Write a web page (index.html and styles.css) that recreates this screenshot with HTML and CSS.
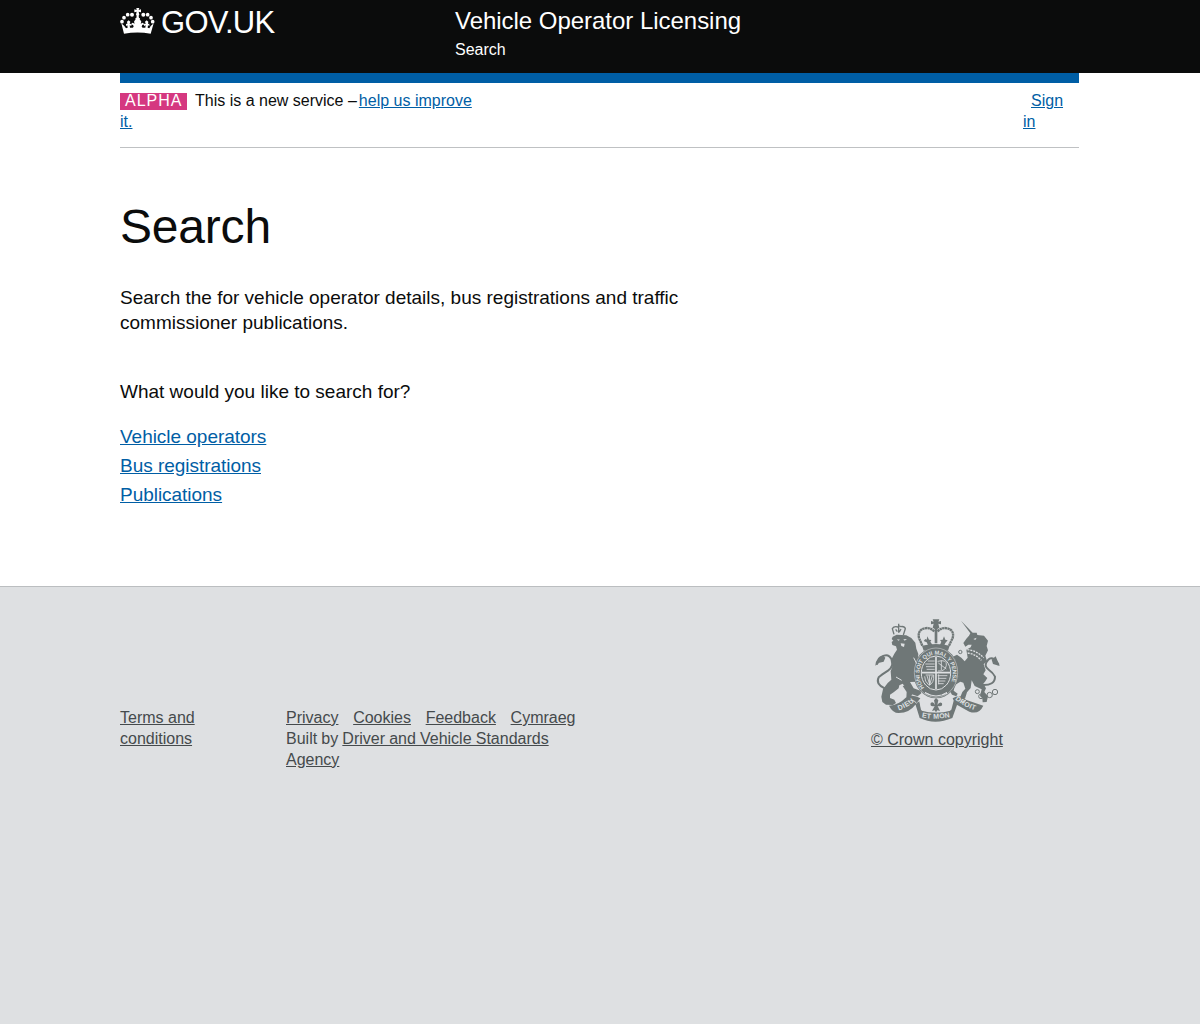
FILE: index.html
```html
<!DOCTYPE html>
<html lang="en">
<head>
<meta charset="utf-8">
<title>Search - Vehicle Operator Licensing</title>
<link rel="stylesheet" href="styles.css">
</head>
<body>
<header class="header">
  <div class="container header-inner">
    <a class="logo" href="#">
      <svg class="crown" viewBox="0 0 105 78" fill="#fff" aria-hidden="true">
        <path d="M49 0h9l-2 6 7-2v9l-7-2 2 9-2 3 1 7h-8l1-7-2-3 2-9-7 2V4l7 2z"/>
        <circle cx="36" cy="20" r="6"/><circle cx="23" cy="20" r="5.5"/><circle cx="12" cy="29" r="5.5"/><circle cx="6" cy="41" r="5.5"/>
        <circle cx="70" cy="20" r="6"/><circle cx="83" cy="20" r="5.5"/><circle cx="93" cy="29" r="5.5"/><circle cx="98" cy="41" r="5.5"/>
        <path d="M4 46l9 8 5 7 5-2-1-7-4 2v-7l4 1-1-7 5-4 5 4-2 7 5-1v7l-5-2 1 7q8 2 11-3l-2-6-4 1q-2-6 3-7l6 3-2-6 3-5 2-2-1-4h14l-1 4 2 2 3 5-2 6 6-3q5 1 3 7l-4-1-2 6q3 5 11 3l1-7-5 2v-7l5 1-2-7 5-4 5 4-1 7 4-1v7l-4-2-1 7 5 2 4-7 9-8-9 31q-39-7-80 0z"/>
      </svg>
      <span class="logo-text">GOV.UK</span>
    </a>
    <div class="service">
      <div class="service-name">Vehicle Operator Licensing</div>
      <div class="service-nav">Search</div>
    </div>
  </div>
</header>
<div class="container blue-bar"></div>
<div class="container phase">
  <p class="phase-text"><strong class="tag">ALPHA</strong><span class="phase-copy">This is a new service –</span><a href="#">help us improve<br>it.</a></p>
  <p class="sign-in"><a href="#">Sign<br>in</a></p>
</div>
<main class="container main">
  <h1>Search</h1>
  <p class="lead">Search the for vehicle operator details, bus registrations and traffic<br>commissioner publications.</p>
  <p class="question">What would you like to search for?</p>
  <ul class="links">
    <li><a href="#">Vehicle operators</a></li>
    <li><a href="#">Bus registrations</a></li>
    <li><a href="#">Publications</a></li>
  </ul>
</main>
<footer class="footer">
  <div class="container footer-inner">
    <div class="terms"><a href="#">Terms and<br>conditions</a></div>
    <div class="meta">
      <div class="meta-links"><a href="#">Privacy</a><a href="#">Cookies</a><a href="#">Feedback</a><a href="#">Cymraeg</a></div>
      <div class="built">Built by <a href="#">Driver and Vehicle Standards<br>Agency</a></div>
    </div>
    <div class="copyright">
      <svg class="crest" viewBox="0 0 435 345" aria-hidden="true">
        <defs>
          <path id="garter" d="M178 233A50 58 0 1 1 248 233"/>
          <path id="dieu" d="M101 301Q129 292 154 270"/>
          <path id="mon" d="M170 322Q214 331 260 320"/>
          <path id="droit" d="M270 268Q300 293 337 303"/>
        </defs>
        <g fill="#6f7777">
          <path d="M83 80L95 74L124 76L139 84L151 98L154 116L160 132L158 151L170 163L175 174L164 181L154 175L150 184L160 203L155 215L135 216L146 235L166 242L169 250L158 259L138 252L124 235L113 221L103 226L101 235L87 246L75 254L75 264L88 269L93 279L84 285L63 284L52 276L49 260L54 238L68 219L79 209L77 184L82 170L77 152L88 131L96 119L93 109L82 105L80 96L85 92L80 87Z"/>
          <path d="M127 224l18 19-9 24 14 2 5 8-21 2-10-14 1-19-12-18z"/>
          <path d="M288 32L323 68L335 68L337 75L357 77L369 92L365 108L369 121L361 137L366 153L356 163L362 181L355 193L367 204L361 214L355 221L363 235L358 246L369 259L365 276L353 277L352 265L345 258L350 238L329 228L320 211L317 234L306 247L300 266L285 263L292 246L301 236L295 218L286 215L270 225L266 242L278 251L274 259L261 254L254 242L260 218L280 199L266 187L276 174L269 164L259 158L272 151L264 140L276 134L289 143L299 154L308 143L306 131L304 119L317 112L320 104L310 104L301 110L295 99L304 86L312 77L316 70Z"/>
          <ellipse cx="213" cy="188" rx="68" ry="77"/>
          <path d="M171 107Q213 97 254 107L249 122Q212 111 176 122Z"/>
          <path d="M203 28h20l-3 7 8-2v10l-8-2 3 12-6 4v43h-8V57l-6-4 3-12-8 2V33l8 2z"/>
          <path d="M190 107l-5-10-9-4 5-6 4 2 2-10 5 10 7 1-3 5 8 12zM224 107l5-12-4-5 8-1 4-10 4 10 7 2-7 8-4 9z"/>
          <path d="M72 287q30-3 50-24 22-13 44 2l-15 19q-17 24-50 25-18 0-29-22zM151 282l12-8 5 25q46 16 91 0l7-27 10 13-14 39q-52 22-98 0zM263 265q22-15 41 5l51 17q-13 28-42 18l-43-24z"/>
        </g>
        <g fill="none" stroke="#6f7777">
          <path d="M172 107L162 84Q157 60 179 55Q196 51 208 65M252 107L263 84Q269 61 247 55Q229 51 217 65" stroke-width="7" stroke-dasharray="7 1"/>
          <path d="M87 73l-5-17q5-9 17-5l4-3 4 2q12-2 14 6l-6 19M101 41v27M92 58l5 7m11-8l-5 9" stroke-width="4"/>
          <path d="M59 235Q31 222 41 202Q49 195 69 182Q88 168 80 149Q72 132 57 137Q42 143 35 164M351 225Q390 227 390 200Q384 188 372 180Q353 167 369 150Q382 134 401 164" stroke-width="6"/>
          <circle cx="337" cy="245" r="6" stroke-width="3"/><circle cx="348" cy="259" r="7" stroke-width="3"/><circle cx="374" cy="255" r="8" stroke-width="3"/><circle cx="390" cy="246" r="8" stroke-width="3"/><circle cx="286" cy="126" r="5" stroke-width="3"/>
        </g>
        <path fill="#6f7777" d="M31 167q3-27 22-31l8 7-5 12-13 3zM404 168l-12-29-12 10 4 13z"/>
        <g fill="#dee0e2">
          <path d="M96 88l9 1-5 3zM115 88l11-1-7 5zM107 100l12 1-2 10-8-3zM325 87l10-4-4 7z"/>
          <path d="M164 275q47 20 99 0l-7 27q-43 11-86 0z"/>
        </g>
        <g fill="none" stroke="#dee0e2">
          <path d="M307 119q28 3 49 24m-48-14q24 3 41 22" stroke-width="4" stroke-dasharray="6 3"/>
          <ellipse cx="213" cy="188" rx="65" ry="74" stroke-width="1.5"/>
          <ellipse cx="213" cy="189" rx="44" ry="51" stroke-width="3"/>
          <path d="M213 141v96M171 188h84" stroke-width="5"/>
          <path d="M181 162h28m-26 8h26m-24 8h24m-21-25h21M218 154q29-7 26 12t-25 17m1-24l24 18m-15-26v29M182 195h24q2 24-14 31-14-12-13-27m7-2l8 27m-1-28l1 28m8-27l-8 27M218 197h29m-28 8h25m-25 8h22m-21 8h16m-15-28v30" stroke-width="2.5"/>
          <path d="M180 247q33 22 66 0M181 250l16 5m34 0l15-5M155 280q-11-14-25-5M303 270l-14 9M146 143l9 18M93 201l17 10" stroke-width="3"/>
        </g>
        <path fill="#6f7777" d="M201 303l8-15q-15 4-12-9 8-6 13 6l-3-14 6-7 7 7-3 14q7-12 14-5 3 12-13 8l7 15-8-2-4 6-4-6z"/>
        <g class="crest-words" fill="#dee0e2">
          <text font-size="17"><textPath href="#garter" textLength="238">HONI SOIT QUI MAL Y PENSE</textPath></text>
          <text font-size="21"><textPath href="#dieu" textLength="54">DIEU</textPath></text>
          <text font-size="21"><textPath href="#mon" textLength="86">ET MON</textPath></text>
          <text font-size="21"><textPath href="#droit" textLength="68">DROIT</textPath></text>
        </g>
      </svg>
      <a href="#">© Crown copyright</a>
    </div>
  </div>
</footer>
</body>
</html>
```
FILE: styles.css
```css
* { box-sizing: border-box; }
body { margin: 0; min-height: 1024px; display: flex; flex-direction: column; background: #fff; color: #0b0c0c; font: 16px/21px "Liberation Sans", Arial, sans-serif; }
p, h1, ul { margin: 0; padding: 0; font-weight: 400; }
ul { list-style: none; }
a { color: #005ea5; }
.container { width: 959px; margin: 0 0 0 120px; }
.header { height: 73px; background: #0b0c0c; color: #fff; }
.header-inner { display: flex; }
.logo { display: flex; width: 335px; color: #fff; text-decoration: none; }
.crown { width: 35px; height: 26px; margin-top: 8px; }
.logo-text { margin: 5px 0 0 6px; font-size: 31px; line-height: 35px; letter-spacing: -0.7px; }
.service-name { margin-top: 6px; font-size: 24px; line-height: 30px; letter-spacing: -0.03px; }
.service-nav { margin-top: 3px; }
.blue-bar { height: 10px; background: #005ea5; }
.phase { display: flex; justify-content: space-between; height: 65px; padding-top: 7px; border-bottom: 1px solid #bfc1c3; }
.tag { display: inline-block; width: 67px; height: 17px; margin-right: 8px; padding-left: 5px; background: #d53880; color: #fff; font-weight: 400; line-height: 16px; letter-spacing: 1px; vertical-align: top; margin-top: 3px; }
.phase-copy { margin-right: 2px; }
.sign-in { width: 56px; text-indent: 8px; }
.main { flex: none; height: 438px; padding-top: 54px; }
h1 { font-size: 48px; line-height: 50px; letter-spacing: -0.2px; }
.lead { margin-top: 33px; font-size: 19px; line-height: 25px; }
.question { margin-top: 44px; font-size: 19px; line-height: 25px; }
.links { margin-top: 18px; font-size: 19px; line-height: 29px; letter-spacing: -0.03px; }
.footer { flex: 1; border-top: 1px solid #bbbec0; background: #dee0e2; color: #454a4c; }
.footer a { color: #454a4c; }
.footer-inner { display: flex; }
.terms { width: 166px; padding-top: 120px; }
.meta { width: 579px; padding-top: 120px; }
.meta-links { display: flex; gap: 14.7px; }
.built { word-spacing: -0.3px; }
.copyright { padding-top: 23px; }
.crest { display: block; width: 145px; height: 115px; }
.copyright a { display: block; width: max-content; margin: 4px 0 0 6px; }
.crest-words { font-weight: 700; }
```
